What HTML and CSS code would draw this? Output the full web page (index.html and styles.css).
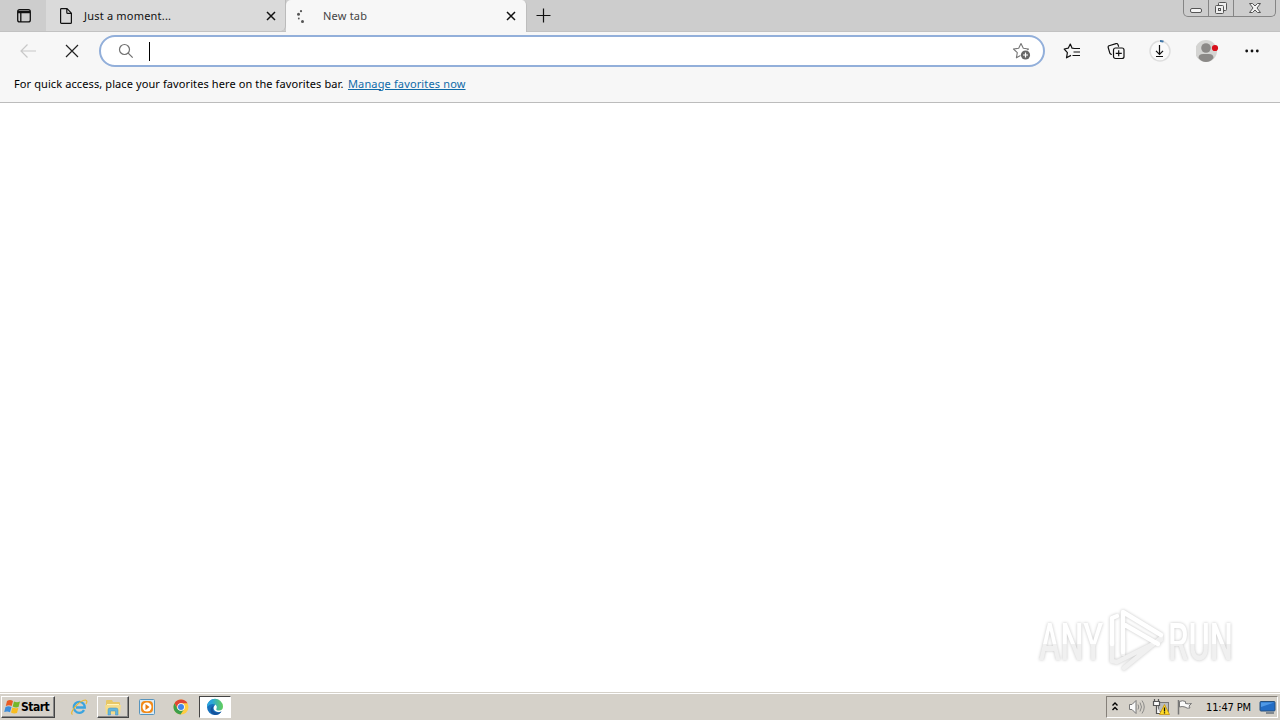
FILE: index.html
```html
<!DOCTYPE html>
<html lang="en">

<head>
    <meta charset="UTF-8">
    <meta name="viewport" content="width=device-width, initial-scale=1.0">
    <title>New tab</title>
    <link rel="stylesheet" href="styles.css">
</head>

<body>
    <div class="tab-strip">
        <div class="tab-actions">
            <svg width="16" height="16" viewBox="0 0 16 16" fill="none" stroke="#111" stroke-width="1.3">
                <rect x="1.7" y="1.7" width="12.6" height="12.2" rx="2" />
                <path d="M2 3.300h12M2 4.500h12M4.800 4v10" />
            </svg>
        </div>
        <div class="tab">
            <svg class="tab-icon" width="14" height="16" viewBox="0 0 14 16" fill="none" stroke="#111" stroke-width="1.2">
                <path d="M1.6 1.4Q1.6.6 2.4.6H8l4.4 4.6v9.3q0 .9-.9.9h-9q-.9 0-.9-.9zM7.8.8v3.6q0 1 1 1h3.4" />
            </svg>
            <span class="tab-title tab-title-moment">Just a moment...</span>
            <svg class="tab-close" width="10" height="10" viewBox="0 0 10 10" stroke="#111" stroke-width="1.5">
                <path d="M1 1l8 8M9 1L1 9" />
            </svg>
        </div>
        <div class="tab tab-active">
            <svg class="tab-icon" width="14" height="16" viewBox="0 0 14 16" fill="#555">
                <circle cx="5" cy="3.200" r="1.100" />
                <circle cx="2.500" cy="6.200" r="1.500" />
                <circle cx="2.800" cy="10.500" r=".9" />
                <circle cx="6.500" cy="13.600" r="1.500" />
            </svg>
            <span class="tab-title tab-title-new">New tab</span>
            <svg class="tab-close" width="10" height="10" viewBox="0 0 10 10" stroke="#111" stroke-width="1.5">
                <path d="M1 1l8 8M9 1L1 9" />
            </svg>
        </div>
        <svg class="new-tab" width="16" height="16" viewBox="0 0 16 16" stroke="#111" stroke-width="1.2">
            <path d="M.5 7.500h14M7.500 .5v14" />
        </svg>
        <div class="window-buttons">
            <div class="window-button">
                <svg width="14" height="15" viewBox="0 0 14 15">
                    <rect x="1.5" y="8.500" width="11" height="4" rx="1.5" fill="#f4f4f4" stroke="#555" />
                </svg>
            </div>
            <div class="window-button">
                <svg width="14" height="15" viewBox="0 0 14 15" fill="#eee" stroke="#555">
                    <rect x="4.5" y="2.5" width="8" height="8" rx="1" />
                    <rect x="1.5" y="5.5" width="8" height="8" rx="1" />
                    <rect x="4.5" y="8.5" width="2" height="2" />
                </svg>
            </div>
            <div class="window-button window-button-close">
                <svg width="14" height="15" viewBox="0 0 14 15">
                    <path d="M1.500 3.500h3L7 6l2.500-2.500h3L9 8l3.500 4.500h-3L7 10l-2.500 2.500h-3L5 8z" fill="#f4f4f4" stroke="#555" />
                </svg>
            </div>
        </div>
    </div>

    <div class="toolbar">
        <svg class="back" width="18" height="16" viewBox="0 0 18 16" fill="none" stroke="#c8c8c8" stroke-width="1.2">
            <path d="M17 8H2M8.500 1.500L2 8l6.500 6.500" />
        </svg>
        <svg class="stop" width="14" height="14" viewBox="0 0 14 14" stroke="#222" stroke-width="1.2">
            <path d="M1 1l12 12M13 1L1 13" />
        </svg>
        <div class="address-bar">
            <svg width="16" height="16" viewBox="0 0 16 16" fill="none" stroke="#707070" stroke-width="1.2">
                <circle cx="6.500" cy="6.500" r="5" />
                <path d="M10.200 10.200l4.500 4.500" />
            </svg>
            <span class="caret"></span>
            <svg class="add-favorite" width="19" height="18" viewBox="0 0 19 18">
                <path d="M9 1.500l2.300 4.800 5.200.7-3.800 3.600.9 5.200L9 13.300l-4.600 2.500.9-5.200L1.500 7l5.200-.7z" fill="none" stroke="#767676" stroke-width="1.1" stroke-linejoin="round" />
                <circle cx="13.500" cy="13" r="5.200" fill="#fff" />
                <circle cx="13.500" cy="13" r="4.600" fill="#666" />
                <path d="M11 13h5M13.500 10.500v5" stroke="#fff" stroke-width="1.200" />
            </svg>
        </div>
        <div class="toolbar-icons">
            <svg width="18" height="18" viewBox="0 0 18 18" fill="none" stroke="#111" stroke-width="1.200" stroke-linejoin="round">
                <path d="M17 6.500h-5.500L9.100 6.200 7.300 2 5.200 6.200 1.200 7l3.200 3.600-.9 5.200 4.500-2.400M10.500 10h6.500M9.500 13.500H17" />
            </svg>
            <svg class="collections" width="18" height="18" viewBox="0 0 18 18" fill="none" stroke="#111" stroke-width="1.200">
                <path d="M4.800 12.300q-1.300.3-1.900-1L1.200 5.500q-.4-1.300.9-1.700L9 1.600q1.400-.4 1.900.8l.8 2.300" />
                <rect x="6.500" y="6" width="10.500" height="10.500" rx="2" />
                <path d="M8.700 11.300h6.100M11.700 8.200v6.100" />
            </svg>
            <svg width="24" height="24" viewBox="0 0 24 24" fill="none">
                <circle cx="12" cy="12" r="10" fill="#fafafa" stroke="#dedede" stroke-width="1.500" />
                <path d="M12 2a10 10 0 0 1 3.500.6" stroke="#3f76a8" stroke-width="2" />
                <path d="M11.500 6v9M8 11.800l3.500 3.500 3.500-3.500M8 17.500h7" stroke="#111" stroke-width="1.200" />
            </svg>
            <svg width="24" height="24" viewBox="0 0 24 24">
                <circle cx="10" cy="12" r="11" fill="#d4d4d2" />
                <circle cx="10" cy="9" r="4.800" fill="#8b8987" />
                <path d="M2.500 19q0-4 4.500-4h6q4.500 0 4.500 4-3 4-7.500 4t-7.500-4z" fill="#8b8987" />
                <circle cx="19" cy="9" r="3.100" fill="#d8101c" />
            </svg>
            <svg width="16" height="16" viewBox="0 0 16 16" fill="#111">
                <circle cx="2.700" cy="8" r="1.400" />
                <circle cx="8" cy="8" r="1.400" />
                <circle cx="13.300" cy="8" r="1.400" />
            </svg>
        </div>
    </div>

    <div class="favorites-bar">
        <span class="favorites-text">For quick access, place your favorites here on the favorites bar.</span>
        <a class="favorites-link" href="#">Manage favorites now</a>
    </div>

    <div class="page">
        <svg class="watermark" width="220" height="80" viewBox="0 0 220 80">
            <defs>
                <linearGradient id="fade" gradientUnits="userSpaceOnUse" x1="0" y1="0" x2="0" y2="80">
                    <stop offset="0.52" stop-color="#fff" />
                    <stop offset="0.52" stop-color="#f0f0f0" />
                </linearGradient>
            </defs>
            <g class="watermark-mark" fill="url(#fade)">
                <text x="9" y="58" textLength="64" lengthAdjust="spacingAndGlyphs">ANY</text>
                <text x="138" y="58" textLength="65" lengthAdjust="spacingAndGlyphs">RUN</text>
                <g fill="none" stroke-width="4.500" stroke-linejoin="round" stroke-linecap="round">
                    <path d="M82 40v19l5 1 44-22M93 38v14M131 36L94 66" stroke="#f0f0f0" />
                    <path d="M87 14l-5 2v26M93 50V10l38 23M95 23l33 19" stroke="#fff" />
                </g>
            </g>
        </svg>
    </div>

    <div class="taskbar">
        <div class="start-button">
            <svg width="17" height="16" viewBox="0 0 17 16">
                <path d="M3 2q3-1.800 6 0L7.700 7Q5 5.500 1.800 7z" fill="#e85b24" />
                <path d="M10 2.500q3 1.500 6 0L14.500 8Q11.500 9 8.700 7.500z" fill="#74b72b" />
                <path d="M1.500 8q3-1.500 6 0L6 13.200Q3.500 11.800.2 13z" fill="#3c8ddb" />
                <path d="M8.400 8.500q3 1.500 6 .3L13 14q-3.200 1-6-.6z" fill="#f8bd20" />
            </svg>
            <span>Start</span>
        </div>
        <div class="task task-ie">
            <svg width="18" height="18" viewBox="0 0 18 18" fill="none">
                <path d="M14 12Q12.500 14.800 9.500 14.800A5.500 5.500 0 1 1 14.800 9.500H6" stroke="#3ba4df" stroke-width="2.300" />
                <path d="M2.500 16.500Q0 15.500 4.500 9.500 11 2 15.500 2q2.500.7.5 4" stroke="#eab832" stroke-width="1.200" />
            </svg>
        </div>
        <div class="task task-open">
            <svg width="18" height="18" viewBox="0 0 18 18">
                <path d="M2 3q0-1 1-1h5l1 2h6q1 0 1 1v10H2z" fill="#e7c766" />
                <path d="M3 6h12v7H3z" fill="#fff5bd" />
                <path d="M1 7h16l-1 9H2z" fill="#f5dc8a" />
                <path d="M4 17v-5q0-2 2-2h6q2 0 2 2v5h-2.500v-4h-5v4z" fill="#63b5dc" stroke="#4291bd" stroke-width=".5" />
            </svg>
        </div>
        <div class="task">
            <svg width="18" height="18" viewBox="0 0 18 18">
                <rect x="1.500" y="1.500" width="15" height="15" rx="1" fill="#d9ebf7" stroke="#5794bd" />
                <rect x="3" y="3" width="12" height="12" rx="4" fill="#f28a19" />
                <circle cx="9" cy="9" r="4.500" fill="#fff" />
                <path d="M7.500 6l4 3-4 3z" fill="#e87b12" />
            </svg>
        </div>
        <div class="task">
            <svg width="18" height="18" viewBox="0 0 18 18">
                <circle cx="9" cy="9" r="7.500" fill="#ffcd42" />
                <path d="M2.500 5.200A7.500 7.500 0 0 1 15.500 5.200H9Q6 5.200 5.500 10.500z" fill="#df4535" />
                <path d="M2.500 5.200A7.500 7.500 0 0 0 8.500 16.500l3.500-5.300Q8 14 5.500 10.800z" fill="#3b9f4b" />
                <circle cx="9" cy="9" r="3.800" fill="#fff" />
                <circle cx="9" cy="9" r="3" fill="#4285e8" />
            </svg>
        </div>
        <div class="task task-current">
            <svg width="18" height="18" viewBox="0 0 18 18">
                <defs>
                    <linearGradient id="edge" x1="0" y1="0" x2="1" y2="0">
                        <stop offset="0.3" stop-color="#2aa6dc" />
                        <stop offset="1" stop-color="#63cf58" />
                    </linearGradient>
                </defs>
                <path d="M1 9A8 8 0 0 1 9 1v6Q6 10 9 13q3 2 6.500.5Q13 17 9 17A8 8 0 0 1 1 9z" fill="#1771bd" />
                <path d="M1 9A8 8 0 0 1 17 8.500q0 4-4 4-3.500 0-2.500-2Q11.500 8 9 6.500 4.500 5 1 9z" fill="url(#edge)" />
                <path d="M7.500 8Q5 13 10 14.500q3 .5 5.500-1Q13 17 9 17q-4.500-1-4.500-5 .5-3.500 3-4z" fill="#14529b" />
            </svg>
        </div>
        <div class="tray">
            <svg class="tray-chevrons" width="8" height="10" viewBox="0 0 8 10" fill="none" stroke="#000" stroke-width="1.400">
                <path d="M1.500 3.500L4 1 6.500 3.500M1.500 8L4 5.500l2.500 2.500" />
            </svg>
            <svg class="tray-volume" width="18" height="16" viewBox="0 0 18 16" stroke="#777" fill="none">
                <path d="M1.500 5.500h2.500l4-4v13l-4-4H1.500z" fill="#fafafa" />
                <path d="M10 5.500q1.500 2.500 0 5M12 3.500q3 4.500 0 9M14 1.500q4.500 6.500 0 13" stroke-width=".8" />
            </svg>
            <svg width="18" height="18" viewBox="0 0 18 18">
                <rect x="6.500" y="4.500" width="10" height="9" fill="#b9bcbd" stroke="#777" />
                <path d="M1.500 3.500h6v4h-6zM2.500 1v2.500M6.500 1v2.500M4.500 7.500v8h4" fill="#fafafa" stroke="#555" stroke-width="1.200" />
                <path d="M12.500 6.500l5 10h-10z" fill="#ffdc25" stroke="#c59212" stroke-width=".8" />
                <path d="M12.500 9.500v4M12.500 14.200v1.300" stroke="#111" stroke-width="1.300" />
            </svg>
            <svg width="18" height="16" viewBox="0 0 18 16">
                <path d="M3.500 2.500q3-1.500 6 0v2q3 .8 6 0l-2.500 2.500 1 2q-3 .8-5-1-3-1-5.500 0z" fill="#fafafa" stroke="#777" />
                <path d="M2.500 1v14.500" stroke="#777" stroke-width="1.500" />
            </svg>
            <span class="clock">11:47 PM</span>
            <svg width="17" height="16" viewBox="0 0 17 16">
                <rect x="1" y="2.500" width="15" height="9.500" rx="1" fill="#236dc5" stroke="#28517c" />
                <path d="M2 3.500h13L2 8z" fill="#4f99e6" />
                <path d="M7 14h8" stroke="#64717c" stroke-width="1.500" />
            </svg>
        </div>
    </div>
</body>

</html>
```

FILE: styles.css
```css
* {
    box-sizing: border-box;
}

body {
    margin: 0;
    height: 720px;
    display: flex;
    flex-direction: column;
    overflow: hidden;
    background-color: white;
    color: #111;
    font-family: 'Noto Sans', sans-serif;
    font-size: 11px;
}

svg {
    display: block;
    flex: none;
}

.tab-strip {
    display: flex;
    height: 32px;
    background-color: #cdcdcd;
    border-bottom: 1px solid #c2c2c2;
}

.tab-actions {
    width: 46px;
    padding: 8px 0 0 16px;
}

.tab {
    display: flex;
    align-items: center;
    width: 240px;
    height: 31px;
    padding: 0 9px 0 13px;
    background-color: #dadada;
    border-right: 1px solid #bbb;
    border-radius: 0 0 5px 0;
}

.tab-active {
    width: 241px;
    height: 32px;
    padding: 0 10px 1px 10px;
    background-color: #f7f7f7;
    border-right: 1px solid #bdbdbd;
    border-radius: 5px 5px 0 0;
}

.tab-title {
    margin-left: 11px;
    letter-spacing: 0.2px;
    white-space: nowrap;
}

.tab-active .tab-title {
    margin-left: 13px;
    color: #444;
}

.tab-close {
    margin-left: auto;
}

.new-tab {
    margin: 8px 0 0 9px;
}

.window-buttons {
    display: flex;
    width: 93px;
    height: 17px;
    margin: 0 4px 0 auto;
    border: 1px solid #858585;
    border-top: none;
    border-radius: 0 0 5px 5px;
}

.window-button {
    display: flex;
    justify-content: center;
    width: 25px;
    border-right: 1px solid #858585;
}

.window-button-close {
    flex: 1;
    border-right: none;
}

.toolbar {
    display: flex;
    align-items: center;
    height: 38px;
    padding-left: 19px;
    background-color: #f7f7f7;
}

.stop {
    margin-left: 28px;
}

.address-bar {
    display: flex;
    align-items: center;
    width: 946px;
    height: 32px;
    margin-left: 20px;
    padding: 0 12px 0 17px;
    background-color: white;
    border: 2px solid #92afda;
    border-radius: 16px;
}

.caret {
    width: 1px;
    height: 19px;
    margin-left: 15px;
    background-color: black;
}

.add-favorite {
    margin-left: auto;
}

.toolbar-icons {
    flex: 1;
    display: flex;
    align-items: center;
    justify-content: space-between;
    padding: 0 20px 0 18px;
}

.collections {
    margin: 0 -2px 0 2px;
}

.favorites-bar {
    display: flex;
    align-items: center;
    gap: 5px;
    height: 33px;
    padding: 0 0 6px 14px;
    background-color: #f7f7f7;
    border-bottom: 1px solid #bcbcbc;
    color: #000;
    white-space: nowrap;
}

.favorites-text {
    width: 329px;
    letter-spacing: 0.1px;
}

.favorites-link {
    color: #0f6ba8;
    letter-spacing: 0.14px;
}

.page {
    flex: 1;
    display: flex;
    align-items: flex-end;
    justify-content: flex-end;
    padding: 0 30px 10px 0;
}

.watermark {
    overflow: visible;
}

.watermark-mark {
    font-family: Roboto, sans-serif;
    font-size: 51px;
    font-weight: 500;
    filter: drop-shadow(0 0 1.5px #c4c4c4);
}

.taskbar {
    display: flex;
    align-items: center;
    height: 28px;
    padding: 2px 2px 1px 1px;
    background-color: #d5d1c9;
    border-top: 1px solid #d5d1c9;
    box-shadow: inset 0 1px #fff;
}

.start-button {
    display: flex;
    align-items: center;
    width: 54px;
    height: 22px;
    padding-left: 2px;
    border: 1px solid;
    border-color: #fff #444 #444 #fff;
    box-shadow: inset -1px -1px #888;
    color: #000;
    font-family: 'DejaVu Sans Condensed', 'DejaVu Sans', sans-serif;
    font-size: 12px;
    font-stretch: condensed;
    font-weight: bold;
    letter-spacing: -0.5px;
}

.task {
    display: flex;
    align-items: center;
    justify-content: center;
    width: 32px;
    height: 22px;
    margin-right: 2px;
    border: 1px solid transparent;
}

.task-ie {
    margin-left: 8px;
}

.task-open {
    border-color: #fff #444 #444 #fff;
    box-shadow: inset -1px -1px #888;
}

.task-current {
    background-color: #fff;
    border-color: #444 #fff #fff #444;
}

.tray {
    display: flex;
    align-items: center;
    gap: 6px;
    width: 172px;
    height: 22px;
    margin-left: auto;
    padding-left: 4px;
    border: 1px solid;
    border-color: #858079 #fff #fff #858079;
}

.tray-volume {
    margin-left: 3px;
}

.clock {
    width: 47px;
    margin-left: 6px;
    color: #000;
    font-family: 'DejaVu Sans Condensed', 'DejaVu Sans', sans-serif;
    font-stretch: condensed;
    letter-spacing: -0.15px;
    white-space: nowrap;
}
```
